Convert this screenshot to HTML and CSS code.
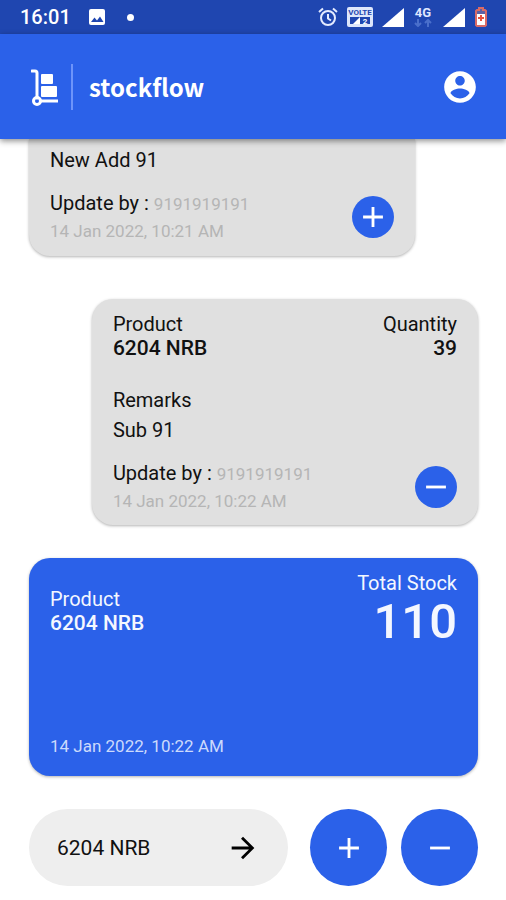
FILE: index.html
```html
<!DOCTYPE html>
<html lang="en">
<head>
<meta charset="utf-8">
<meta name="viewport" content="width=device-width, initial-scale=1">
<title>stockflow</title>
<link rel="stylesheet" href="styles.css">
</head>
<body>
<div class="status">
  <span class="clock">16:01</span>
  <svg class="s-photo" width="18" height="18" viewBox="0 0 18 18"><rect x="1" y="1" width="16" height="16" rx="2" fill="#fff"/><path d="M3 14l3.500-4.500 2.500 3 3-4 3.500 5.500z" fill="#1f46b0"/></svg>
  <span class="s-dot"></span>
  <svg class="s-alarm" width="20" height="20" viewBox="0 0 20 20" fill="none" stroke="#e4ebff" stroke-width="2"><circle cx="10" cy="11" r="7"/><path d="M10 7v4.500l3 2M1 5l4-3.500M19 5l-4-3.500"/></svg>
  <svg class="s-volte" width="26" height="20" viewBox="0 0 26 20"><rect width="26" height="20" rx="2" fill="#dde6fb"/><text x="13" y="8" text-anchor="middle" class="volte-text">VOLTE</text><path d="M3 10h20v7H3z" fill="#1f46b0"/><path d="M6 17l7-7v7z" fill="#fff"/><text x="18" y="17" text-anchor="middle" class="volte-num">2</text></svg>
  <svg class="s-signal" width="22" height="19" viewBox="0 0 22 19"><path d="M0 19L22 0v19z" fill="#fff"/></svg>
  <span class="net"><span>4G</span><svg width="18" height="8" viewBox="0 0 18 8" fill="none" stroke="#4a6fcb" stroke-width="2"><path d="M4 0v6M1 4l3 3 3-3M14 8V2M11 4l3-3 3 3"/></svg></span>
  <svg class="s-signal" width="22" height="19" viewBox="0 0 22 19"><path d="M0 19L22 0v19z" fill="#fff"/></svg>
  <svg class="s-batt" width="12" height="20" viewBox="0 0 12 20"><path d="M4 1h4v2h2l1 1v14l-1 1H2l-1-1V4l1-1h2z" fill="#5c61a5" stroke="#d96b66" stroke-width="2"/><path d="M2 7h8v11H2z" fill="#fff"/><path d="M6 8v6M3 11h6" stroke="#e8503f" stroke-width="2"/></svg>
</div>
<header class="bar">
  <svg class="logo" width="28" height="38" viewBox="0 0 28 38"><path d="M1 2h3q2 0 2 2v25" fill="none" stroke="#fff" stroke-width="3" stroke-linecap="round"/><circle cx="6" cy="32" r="3.500" fill="none" stroke="#fff" stroke-width="3"/><path d="M10 32h17" stroke="#fff" stroke-width="3"/><rect x="10" y="5" width="12" height="10" rx="1" fill="#fff"/><rect x="10" y="17" width="16" height="11" rx="1" fill="#fff"/></svg>
  <span class="rule"></span>
  <h1>stockflow</h1>
  <button class="account" aria-label="Account"><svg width="38" height="38" viewBox="0 0 24 24" fill="#fff"><path d="M12 2C6.480 2 2 6.480 2 12s4.480 10 10 10 10-4.480 10-10S17.520 2 12 2zm0 3c1.660 0 3 1.340 3 3s-1.340 3-3 3-3-1.340-3-3 1.340-3 3-3zm0 14.200c-2.500 0-4.710-1.280-6-3.220.030-1.990 4-3.080 6-3.080 1.990 0 5.970 1.090 6 3.080-1.290 1.940-3.500 3.220-6 3.220z"/></svg></button>
</header>
<main>
  <article class="card add">
    <p>New Add 91</p>
    <div class="foot">
      <div>
        <p>Update by : <span class="phone">9191919191</span></p>
        <p class="date">14 Jan 2022, 10:21 AM</p>
      </div>
      <button class="round" aria-label="Add"><svg width="34" height="34" viewBox="0 0 24 24" fill="#fff"><path d="M19 13h-6v6h-2v-6H5v-2h6V5h2v6h6v2z"/></svg></button>
    </div>
  </article>
  <article class="card sub">
    <div class="pair">
      <div><p>Product</p><p class="strong">6204 NRB</p></div>
      <div class="end"><p>Quantity</p><p class="strong">39</p></div>
    </div>
    <p class="remarks">Remarks</p>
    <p>Sub 91</p>
    <div class="foot">
      <div>
        <p>Update by : <span class="phone">9191919191</span></p>
        <p class="date">14 Jan 2022, 10:22 AM</p>
      </div>
      <button class="round" aria-label="Subtract"><svg width="34" height="34" viewBox="0 0 24 24" fill="#fff"><path d="M19 13H5v-2h14v2z"/></svg></button>
    </div>
  </article>
  <section class="total">
    <div class="pair">
      <div class="item"><p>Product</p><p class="strong">6204 NRB</p></div>
      <div class="end"><p>Total Stock</p><p class="count">110</p></div>
    </div>
    <p class="date">14 Jan 2022, 10:22 AM</p>
  </section>
  <div class="actions">
    <form class="search">
      <input type="text" value="6204 NRB" aria-label="Product">
      <button type="button" aria-label="Go"><svg width="34" height="34" viewBox="0 0 24 24"><path d="M12 4l-1.410 1.410L16.170 11H4v2h12.170l-5.580 5.590L12 20l8-8z"/></svg></button>
    </form>
    <button class="round big" aria-label="Add stock"><svg width="34" height="34" viewBox="0 0 24 24" fill="#fff"><path d="M19 13h-6v6h-2v-6H5v-2h6V5h2v6h6v2z"/></svg></button>
    <button class="round big" aria-label="Subtract stock"><svg width="34" height="34" viewBox="0 0 24 24" fill="#fff"><path d="M19 13H5v-2h14v2z"/></svg></button>
  </div>
</main>
</body>
</html>
```
FILE: styles.css
```css
* { box-sizing: border-box; }
body { margin: 0; background: #fff; color: #111; font: 20px/24px Roboto, sans-serif; }
p, h1 { margin: 0; }
button { border: 0; padding: 0; background: none; display: flex; align-items: center; justify-content: center; cursor: pointer; }
svg { display: block; flex: none; }

.status { display: flex; align-items: center; height: 34px; padding: 0 19px 0 20px; background: #1f46b0; color: #fff; }
.clock { font-weight: 500; }
.s-photo { margin-left: 17px; }
.s-dot { width: 7px; height: 7px; margin-left: 21px; border-radius: 50%; background: #fff; }
.s-alarm { margin-left: auto; }
.s-volte { margin-left: 9px; }
.s-signal { margin-left: 9px; }
.s-batt { margin-left: 10px; }
.volte-text { font: 700 8px Roboto, sans-serif; fill: #1f46b0; }
.volte-num { font: 700 8px Roboto, sans-serif; fill: #fff; }
.net { display: flex; flex-direction: column; align-items: center; margin-left: 10px; font-size: 13px; line-height: 12px; font-weight: 700; color: #dfe7ff; }
.net + .s-signal { margin-left: 11px; }

.bar { position: relative; display: flex; align-items: center; height: 105px; padding: 0 27px 0 31px; background: #2b61e9; color: #fff; box-shadow: 0 2px 6px rgba(0, 0, 0, .45); }
.logo { margin-top: 2px; }
.rule { width: 2px; height: 46px; margin: 0 16px 0 12px; background: #6d94fa; }
h1 { font: 700 24px/36px "Noto Sans CJK JP", sans-serif; }
.account { margin-left: auto; }

main { padding: 0 28px 14px 29px; }
.card { width: 86%; padding: 13px 21px 12px; border-radius: 21px; background: #e0e0e0; box-shadow: 0 1px 3px rgba(0, 0, 0, .3); }
.add { padding-top: 9px; padding-bottom: 13px; border-radius: 0 0 21px 21px; }
.sub { margin: 43px 0 33px auto; }
.pair { display: flex; justify-content: space-between; }
.end { text-align: right; }
.strong { font-size: 21px; font-weight: 500; }
.remarks { margin: 28px 0 6px; }
.foot { display: flex; align-items: center; justify-content: space-between; margin-top: 19px; }
.phone { font-size: 17px; line-height: 20px; color: #b5b5b5; }
.date { margin-top: 4px; font-size: 17px; color: #b5b5b5; }
.round { flex: none; width: 42px; height: 42px; border-radius: 50%; background: #2b61e9; }

.total { display: flex; flex-direction: column; justify-content: space-between; min-height: 218px; padding: 13px 21px 18px; border-radius: 21px; background: #2b61e9; color: #f4f7ff; box-shadow: 0 1px 3px rgba(0, 0, 0, .3); }
.item { padding-top: 16px; }
.count { font-size: 49px; line-height: 54px; font-weight: 500; }
.total .date { color: #ccdafc; }

.actions { display: flex; gap: 14px; margin-top: 33px; }
.search { flex: 1; display: flex; align-items: center; min-width: 0; height: 77px; margin-right: 8px; padding: 0 28px; border-radius: 39px; background: #eee; }
.search input { flex: 1; min-width: 0; padding: 0; border: 0; outline: 0; background: none; color: #111; font: 21px/24px Roboto, sans-serif; }
.big { width: 77px; height: 77px; }
```
